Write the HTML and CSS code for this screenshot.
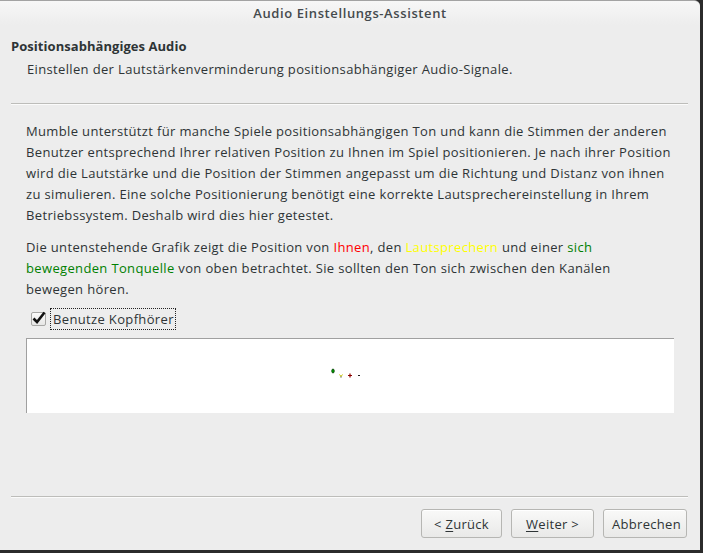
FILE: index.html
```html
<!DOCTYPE html>
<html lang="de">
<head>
<meta charset="utf-8">
<title>Audio Einstellungs-Assistent</title>
<link rel="stylesheet" href="styles.css">
</head>
<body>
<div class="window">
  <div class="titlebar">Audio Einstellungs-Assistent</div>
  <div class="header">
    <div class="h-title">Positionsabhängiges Audio</div>
    <div class="h-sub">Einstellen der Lautstärkenverminderung positionsabhängiger Audio-Signale.</div>
  </div>
  <div class="sep top-sep"></div>
  <div class="content">
    <p class="para p1">Mumble unterstützt für manche Spiele positionsabhängigen Ton und kann die Stimmen der anderen<br>Benutzer entsprechend Ihrer relativen Position zu Ihnen im Spiel positionieren. Je nach ihrer Position<br>wird die Lautstärke und die Position der Stimmen angepasst um die Richtung und Distanz von ihnen<br>zu simulieren. Eine solche Positionierung benötigt eine korrekte Lautsprechereinstellung in Ihrem<br>Betriebssystem. Deshalb wird dies hier getestet.</p>
    <p class="para p2">Die untenstehende Grafik zeigt die Position von <span class="red">Ihnen</span>, den <span class="yellow">Lautsprechern</span> und einer <span class="green">sich<br>bewegenden Tonquelle</span> von oben betrachtet. Sie sollten den Ton sich zwischen den Kanälen<br>bewegen hören.</p>
    <label class="check-row">
      <span class="checkbox">
        <svg width="16" height="16" viewBox="0 0 16 16">
          <path d="M2.5 8.5 L6 12 L13.5 2.5" fill="none" stroke="#111" stroke-width="2.6" stroke-linejoin="miter"/>
        </svg>
      </span>
      <span class="check-label">Benutze Kopfhörer</span>
    </label>
    <div class="graphic">
      <svg class="scene" width="647" height="74" viewBox="0 0 647 74">
        <ellipse cx="306" cy="32" rx="1.3" ry="2" fill="#00a000" stroke="#003000" stroke-width="0.7"/>
        <path d="M312.5 35.5 L314 37.5 L315.5 35.5" fill="none" stroke="#c8c800" stroke-width="1"/>
        <path d="M313.5 38 L314.5 38" stroke="#202020" stroke-width="1"/>
        <path d="M321 36.5 H325 M323 34.5 V38.5" stroke="#8b0000" stroke-width="1.2"/>
        <path d="M331 36.5 H333" stroke="#202020" stroke-width="1.2"/>
      </svg>
    </div>
  </div>
  <div class="spacer"></div>
  <div class="sep bottom-sep"></div>
  <div class="buttons">
    <button class="btn btn-back">&lt; <u>Z</u>urück</button>
    <button class="btn btn-next"><u>W</u>eiter &gt;</button>
    <button class="btn btn-cancel">Abbrechen</button>
  </div>
</div>
</body>
</html>
```

FILE: styles.css
```css
html, body {
  margin: 0;
  padding: 0;
  background: #2b2b2b;
  width: 703px;
  height: 553px;
  overflow: hidden;
}

body {
  font-family: "Open Sans", "DejaVu Sans", sans-serif;
  font-size: 13px;
  color: #2e3436;
}

.window {
  width: 700px;
  height: 550px;
  background: #ededed;
  border-top-right-radius: 6px;
  display: flex;
  flex-direction: column;
  box-sizing: border-box;
  border-top: 1px solid #a3a3a3;
}

.titlebar {
  height: 24px;
  line-height: 24px;
  text-align: center;
  font-weight: 600;
  font-size: 13px;
  letter-spacing: 0.6px;
  color: #454a4d;
  background: linear-gradient(#f7f7f7, #ededed);
  border-top-right-radius: 6px;
}

.header {
  padding: 12px 0 0 11px;
}

.h-title {
  font-weight: 700;
  line-height: 18px;
  font-size: 13px;
  letter-spacing: 0.05px;
}

.h-sub {
  margin-top: 5px;
  padding-left: 16px;
  line-height: 18px;
  letter-spacing: 0.35px;
}

.sep {
  margin: 0 12px 0 11px;
  height: 0;
  border-top: 1px solid #bdbdba;
  border-bottom: 1px solid #fbfbfb;
}

.top-sep {
  margin-top: 25px;
}

.content {
  padding: 0 26px 0 26px;
}

.para {
  margin: 0;
  line-height: 21px;
  white-space: nowrap;
  letter-spacing: 0.35px;
}

.p1 {
  margin-top: 16px;
}

.p2 {
  margin-top: 11px;
}

.red { color: #ff0000; }
.yellow { color: #ffff00; }
.green { color: #008000; }

.check-row {
  margin-top: 8px;
  display: flex;
  align-items: center;
  height: 22px;
  padding-left: 5px;
}

.checkbox {
  width: 13px;
  height: 12px;
  border: 1px solid #a7a7a5;
  border-radius: 2px;
  background: linear-gradient(#fbfbfb, #e6e6e5);
  position: relative;
  flex: none;
}

.checkbox svg {
  position: absolute;
  left: -1px;
  top: -3px;
}

.check-label {
  margin-left: 4px;
  height: 20px;
  line-height: 20px;
  padding: 0 1px 0 2px;
  border: 1px dotted #222;
  letter-spacing: 0.35px;
}

.graphic {
  margin-top: 8px;
  width: 647px;
  height: 74px;
  background: #fff;
  border-top: 1px solid #a0a0a0;
  border-left: 1px solid #a0a0a0;
}

.scene {
  display: block;
}

.spacer {
  flex: 1;
}

.buttons {
  display: flex;
  justify-content: flex-end;
  gap: 9px;
  padding: 11px 13px 12px 0;
}

.btn {
  font-family: inherit;
  font-size: 13px;
  color: #2e3436;
  height: 29px;
  padding: 0 8px;
  border: 1px solid #b6b6b3;
  border-radius: 3px;
  background: linear-gradient(#f9f9f8, #e9e9e8);
  box-shadow: inset 0 1px #ffffff;
  letter-spacing: 0.3px;
  white-space: nowrap;
}

.btn u {
  text-decoration-thickness: 1px;
  text-underline-offset: 2px;
}

.btn-back { width: 81px; }
.btn-next { width: 83px; }
.btn-cancel { width: 84px; }
```
